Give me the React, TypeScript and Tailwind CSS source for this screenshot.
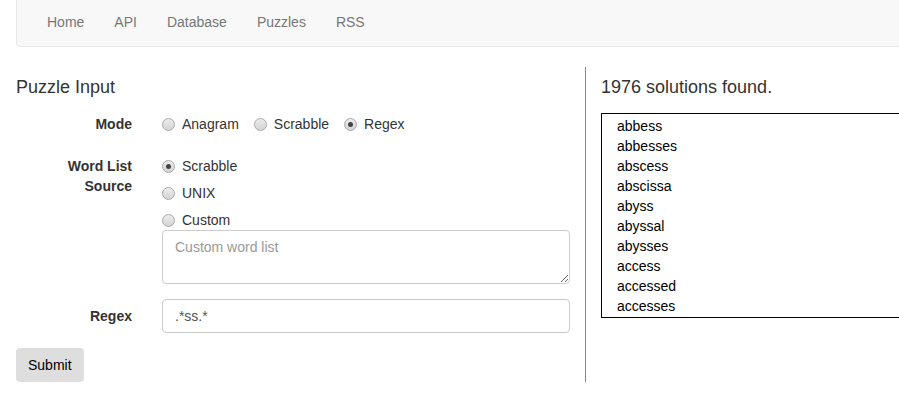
import React from 'react';

const navLinks = ['Home', 'API', 'Database', 'Puzzles', 'RSS'];

const words = [
  'abbess',
  'abbesses',
  'abscess',
  'abscissa',
  'abyss',
  'abyssal',
  'abysses',
  'access',
  'accessed',
  'accesses',
];

const Radio = ({ checked }: { checked?: boolean }) => {
  return (
    <span className="relative inline-block w-[13px] h-[13px] shrink-0 rounded-full border border-[#a9a9a9] bg-linear-to-b from-[#ececec] to-[#d4d4d4]">
      {checked && (
        <span className="absolute left-[3px] top-[3px] w-[5px] h-[5px] rounded-full bg-[#444]" />
      )}
    </span>
  );
};

const Option = ({ label, checked }: { label: string; checked?: boolean }) => {
  return (
    <div className="flex items-center gap-[7px] h-5 leading-5">
      <Radio checked={checked} />
      <span>{label}</span>
    </div>
  );
};

interface RowProps {
  label: React.ReactNode;
  children: React.ReactNode;
}

const Row = ({ label, children }: RowProps) => {
  return (
    <div className="flex mb-[15px]">
      <div className="w-[116px] pl-[15px] pt-[7px] text-right font-bold leading-5">
        {label}
      </div>
      <div className="ml-[30px] w-[408px]">{children}</div>
    </div>
  );
};

export default function App() {
  return (
    <div className="w-[899px] h-[401px] overflow-hidden bg-white text-[14px] text-[#333] font-['Liberation_Sans',Arial,sans-serif]">
      <nav className="ml-4 mt-[-3px] w-[900px] h-[50px] flex bg-[#f8f8f8] border border-[#e7e7e7] rounded-[4px] pl-[15px]">
        {navLinks.map((link) => (
          <a key={link} className="px-[15px] pt-[14px] leading-5 text-[#777]">
            {link}
          </a>
        ))}
      </nav>

      <div className="flex mt-[20px] ml-4">
        <div className="w-[569px] shrink-0">
          <h4 className="mt-[10px] mb-[10px] text-[18px] leading-[20px]">Puzzle Input</h4>

          <Row label="Mode">
            <div className="flex gap-[15px] pt-[7px]">
              <Option label="Anagram" />
              <Option label="Scrabble" />
              <Option label="Regex" checked />
            </div>
          </Row>

          <Row label="Word List Source">
            <div className="flex flex-col gap-[7px] pt-[7px]">
              <Option label="Scrabble" checked />
              <Option label="UNIX" />
              <Option label="Custom" />
            </div>
            <textarea
              placeholder="Custom word list"
              className="block w-full h-[54px] px-3 py-[6px] border border-[#ccc] rounded-[4px] leading-5 text-[#555] placeholder:text-[#999] outline-none"
            />
          </Row>

          <Row label="Regex">
            <input
              defaultValue=".*ss.*"
              className="block w-full h-[34px] px-3 py-[6px] border border-[#ccc] rounded-[4px] leading-5 text-[#555] outline-none"
            />
          </Row>

          <button className="h-[34px] px-3 bg-[#dedede] rounded-[4px] text-black leading-5">
            Submit
          </button>
        </div>

        <div className="border-l border-[#888] pl-[15px] flex-1">
          <h4 className="mt-[10px] mb-[16px] text-[18px] leading-[20px]">1976 solutions found.</h4>
          <div className="w-[320px] border border-black pt-[2px] pb-[1px] pl-[15px] text-black">
            {words.map((word) => (
              <div key={word} className="leading-5">
                {word}
              </div>
            ))}
          </div>
        </div>
      </div>
    </div>
  );
}
